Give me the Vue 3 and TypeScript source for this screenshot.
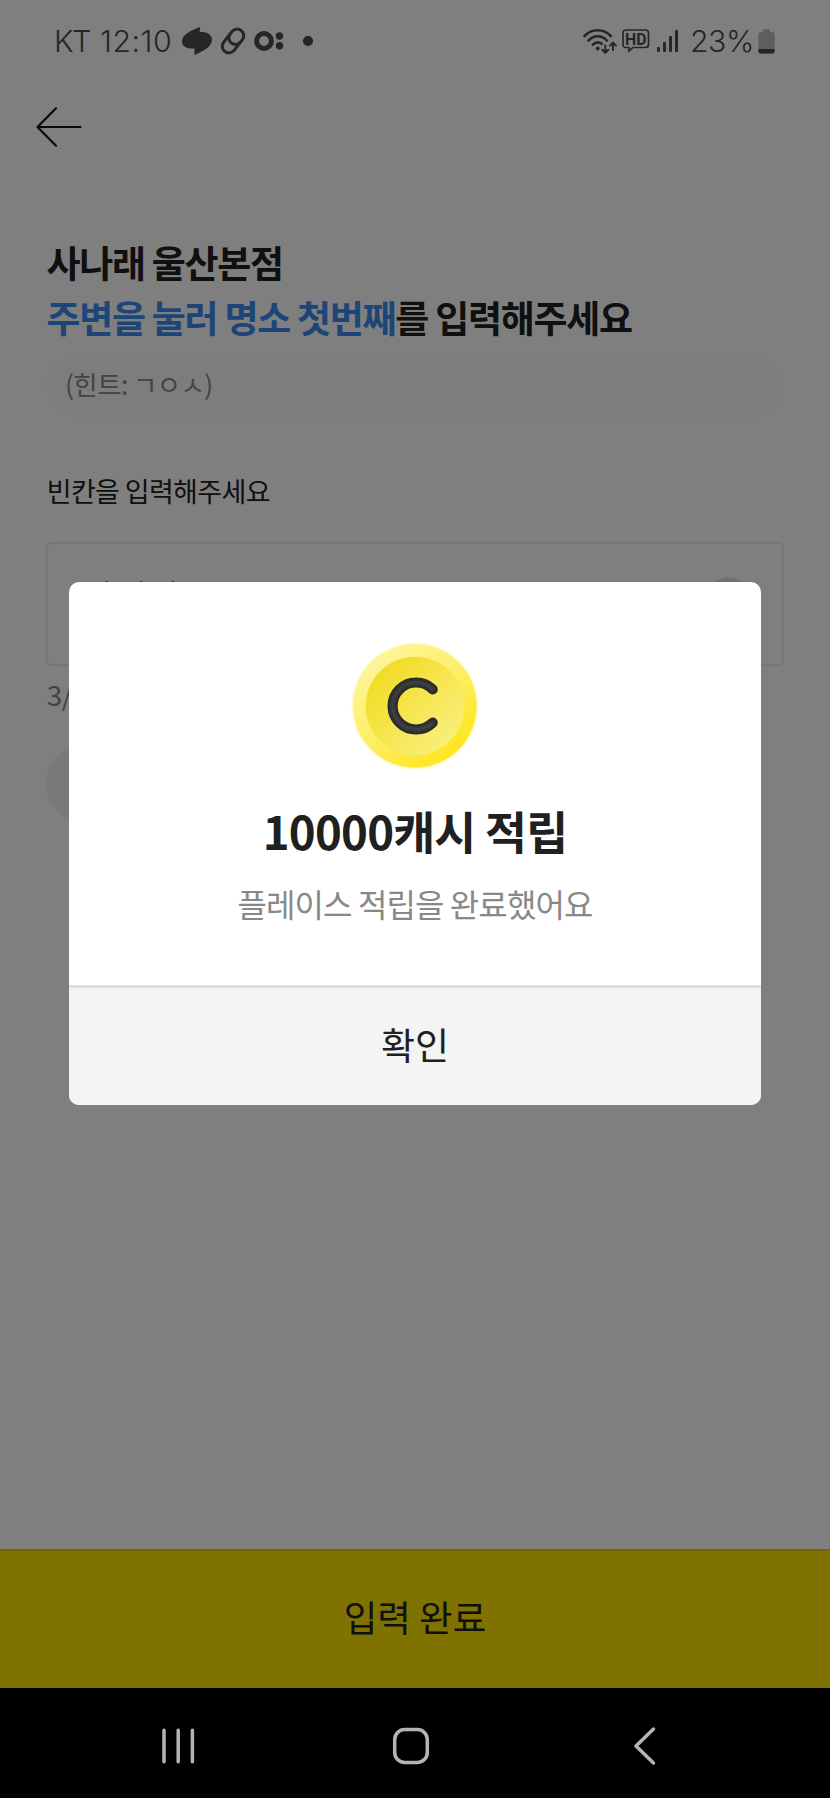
<script setup lang="ts">
import { ref } from 'vue'

const shopName = '사나래 울산본점'
const question = { highlight: '주변을 눌러 명소 첫번째', rest: '를 입력해주세요' }
const hint = '(힌트: ㄱㅇㅅ)'
const answer = ref('간월산')
const signalBars = [5, 10, 16, 22]
</script>

<template>
  <div class="screen">
    <header class="status">
      <span class="carrier">KT</span>
      <span class="clock">12:10</span>
      <svg class="ico-blob" width="30" height="30" viewBox="0 0 30 30">
        <path d="M18 1 C18.600 1 17.500 4.500 17.700 6 C24 5.500 30 8 30 13.500 C30 21 21 25 13.500 28.800 C12 29.500 12.300 25 12.600 22.500 C6 23 0 21 0 15.500 C0 8.500 8 5 18 1Z" />
      </svg>
      <svg class="ico-link" width="26" height="28" viewBox="-13 -14 26 28">
        <g transform="rotate(38)" fill="none" stroke="#4c4c4c" stroke-width="3">
          <rect x="-6.600" y="-13.300" width="13.200" height="26.600" rx="6.600" />
          <path d="M-6.600 -4 A6.600 6.600 0 0 0 6.600 -4" />
        </g>
      </svg>
      <svg class="ico-o" width="30" height="20" viewBox="0 0 30 20">
        <circle cx="10" cy="10" r="7.400" fill="none" stroke="#4c4c4c" stroke-width="5" />
        <circle cx="25.500" cy="5" r="3.700" />
        <circle cx="25.500" cy="14.800" r="3.700" />
      </svg>
      <i class="more-dot"></i>

      <svg class="ico-wifi" width="34" height="26" viewBox="0 0 34 26">
        <g fill="none" stroke="#4c4c4c" stroke-width="2.600" stroke-linecap="round">
          <path d="M1.500 8 Q7 2.200 14.700 2.200 Q22.500 2.200 27.800 8" />
          <path d="M5.500 12.500 Q9.500 8.300 14.700 8.300 Q20 8.300 23.800 12.500" />
          <path d="M9.800 16.700 Q12 14.400 14.700 14.400 Q17 14.400 18.700 15.800" />
          <path stroke-width="2" d="M22.300 17.500 V24.500 M19.300 21.800 L22.300 24.800 L25.300 21.800 M30 22 V15 M27 17.600 L30 14.600 L33 17.600" />
        </g>
        <circle cx="14.700" cy="20.500" r="1.900" />
      </svg>
      <svg class="ico-hd" width="28" height="24" viewBox="0 0 28 24">
        <path d="M4 1 H23.500 Q26.500 1 26.500 4 V15.500 Q26.500 18.500 23.500 18.500 H11 L7 22 V18.500 H4 Q1 18.500 1 15.500 V4 Q1 1 4 1Z" fill="none" stroke="#4c4c4c" stroke-width="1.700" />
        <text x="13.800" y="15.700" text-anchor="middle" textLength="21.500" lengthAdjust="spacingAndGlyphs">HD</text>
      </svg>
      <div class="signal">
        <i v-for="h in signalBars" :key="h" :style="{ height: h + 'px' }"></i>
      </div>
      <span class="percent">23%</span>
      <svg class="ico-batt" width="17" height="25" viewBox="0 0 17 25">
        <path class="shell" d="M5 1 Q5 .2 6 .2 H11 Q12 .2 12 1 V3 H14 Q16.600 3 16.600 5.500 V22 Q16.600 24.500 14 24.500 H3 Q.4 24.500 .4 22 V5.500 Q.4 3 3 3 H5Z" />
        <path d="M.4 20 H16.600 V22 Q16.600 24.500 14 24.500 H3 Q.4 24.500 .4 22Z" />
      </svg>
    </header>

    <nav class="topbar">
      <svg width="46" height="40" viewBox="0 0 46 40">
        <path d="M44.500 20 H1.500 M20 1.200 L1.500 20 L20 38.800" fill="none" stroke="#151515" stroke-width="2.200" stroke-linecap="round" stroke-linejoin="round" />
      </svg>
    </nav>

    <main class="content">
      <h1 class="question">
        {{ shopName }}<br /><em>{{ question.highlight }}</em>{{ question.rest }}
      </h1>
      <p class="hint">{{ hint }}</p>
      <label class="label">빈칸을 입력해주세요</label>
      <div class="field">
        <span>{{ answer }}</span>
        <i class="clear"></i>
      </div>
      <p class="count">{{ answer.length }}/15</p>
      <div class="chip"></div>
    </main>

    <button class="submit">입력 완료</button>
    <div class="dim">
      <section class="modal">
        <div class="modal-body">
          <svg class="coin" width="132" height="132" viewBox="-66 -66 132 132">
            <defs>
              <linearGradient id="rim" x1="0.200" y1="0.100" x2="0.800" y2="0.900">
                <stop offset="0" stop-color="#fff49a" />
                <stop offset="0.500" stop-color="#fdee66" />
                <stop offset="1" stop-color="#ffe620" />
              </linearGradient>
              <linearGradient id="face" x1="0.150" y1="0.150" x2="0.850" y2="0.850">
                <stop offset="0" stop-color="#f1dc25" />
                <stop offset="1" stop-color="#faef79" />
              </linearGradient>
              <filter id="glow" x="-10%" y="-10%" width="120%" height="120%">
                <feGaussianBlur stdDeviation="1.300" />
              </filter>
              <filter id="soft" x="-20%" y="-20%" width="140%" height="140%">
                <feGaussianBlur stdDeviation="1.500" />
              </filter>
            </defs>
            <circle r="62" fill="#fff15c" filter="url(#glow)" />
            <circle r="61.500" fill="url(#rim)" />
            <circle r="49.300" fill="url(#face)" />
            <g fill="none" stroke-linecap="round">
              <path d="M17.700 -16.600 A23.500 23.500 0 1 0 17.700 16.600" stroke="#2a2a2a" stroke-width="10.200" />
              <path d="M17.700 -16.600 A23.500 23.500 0 1 0 17.700 16.600" stroke="#48484b" stroke-width="3" filter="url(#soft)" />
            </g>
          </svg>
          <h2>10000캐시 적립</h2>
          <p>플레이스 적립을 완료했어요</p>
        </div>
        <button class="confirm">확인</button>
      </section>
    </div>

    <footer class="sysnav">
      <svg width="34" height="40" viewBox="0 0 34 40">
        <path d="M2 4.200 V35.800 M16.200 4.200 V35.800 M30.400 4.200 V35.800" />
      </svg>
      <svg class="home" width="38" height="40" viewBox="0 0 38 40">
        <rect x="2.700" y="3.500" width="32.600" height="33" rx="10" />
      </svg>
      <svg width="24" height="40" viewBox="0 0 24 40">
        <path d="M20.500 3 L3 20 L20.500 37" />
      </svg>
    </footer>
  </div>
</template>

<style>
body {
  margin: 0;
}
</style>

<style scoped>
.screen {
  position: relative;
  display: flex;
  flex-direction: column;
  width: 830px;
  height: 1798px;
  background: #fff;
  overflow: hidden;
  font-family: 'Noto Sans CJK KR', sans-serif;
  color: #202020;
}
h1, h2, p {
  margin: 0;
}
button {
  border: 0;
  padding: 0;
  font-family: inherit;
  color: inherit;
}
svg {
  display: block;
  flex: none;
}
.status {
  display: flex;
  align-items: center;
  height: 82px;
  padding: 0 55px 0 54px;
  box-sizing: border-box;
  font: 350 30.300px/82px Inter, sans-serif;
  color: #4c4c4c;
  white-space: nowrap;
}
.status svg {
  fill: #4c4c4c;
}
.carrier {
  width: 46px;
  letter-spacing: -1.400px;
}
.clock {
  width: 82px;
  letter-spacing: 0.500px;
}
.ico-link {
  margin-left: 8px;
}
.ico-o {
  margin-left: 8px;
}
.more-dot {
  width: 9.500px;
  height: 9.500px;
  border-radius: 50%;
  background: #4c4c4c;
  margin-left: 19px;
}
.ico-wifi {
  margin-left: auto;
}
.ico-hd {
  margin-left: 5px;
}
.ico-hd text {
  font: 700 16px Roboto, sans-serif;
}
.signal {
  display: flex;
  align-items: flex-end;
  gap: 3.300px;
  height: 22px;
  margin: 0 12px 0 7px;
}
.signal i {
  width: 2.700px;
  border-radius: 1px;
  background: #4c4c4c;
}
.percent {
  width: 68px;
  letter-spacing: -0.500px;
}
.ico-batt .shell {
  fill: #bcbcbc;
}
.topbar {
  height: 153px;
  padding: 25px 0 0 36px;
  box-sizing: border-box;
}
.content {
  display: flex;
  flex-direction: column;
  flex: 1;
  padding: 0 46px;
}
.question {
  padding-left: 0.500px;
  font-size: 37px;
  line-height: 55px;
  font-weight: 700;
  letter-spacing: -1.290px;
  white-space: nowrap;
}
.question em {
  font-style: normal;
  color: #3a8bf0;
}
.hint {
  height: 60px;
  margin-top: 12px;
  padding-left: 19px;
  border-radius: 30px;
  background: #fafafa;
  font-size: 26.500px;
  line-height: 54px;
  letter-spacing: -0.600px;
  color: #888;
}
.label {
  margin-top: 55px;
  padding-left: 0.700px;
  font-size: 27px;
  line-height: 38px;
  letter-spacing: -0.640px;
}
.field {
  display: flex;
  align-items: center;
  justify-content: space-between;
  height: 124px;
  margin-top: 32px;
  padding: 0 33px;
  box-sizing: border-box;
  border: 2px solid #ededed;
  border-radius: 5px;
  font-size: 36px;
  line-height: 52px;
}
.field span {
  margin-top: -16px;
}
.clear {
  width: 41px;
  height: 41px;
  margin-top: -14px;
  border-radius: 50%;
  background: #e2e2e2;
}
.count {
  margin-top: 9px;
  padding-left: 0.700px;
  font-size: 28px;
  line-height: 38px;
  letter-spacing: -0.500px;
  color: #888;
}
.chip {
  width: 300px;
  height: 80px;
  margin-top: 31px;
  border-radius: 40px;
  background: #f3f3f3;
}
.submit {
  height: 139px;
  margin-bottom: 110px;
  padding-bottom: 6px;
  border-top: 2px solid #e6ce00;
  background: #ffe400;
  font-size: 36.500px;
  line-height: 52px;
}
.dim {
  position: absolute;
  inset: 0 0 110px;
  background: rgba(0, 0, 0, 0.5);
}
.modal {
  width: 692px;
  height: 523px;
  margin: 582px 0 0 69px;
  border-radius: 10px;
  background: #fff;
  overflow: hidden;
  display: flex;
  flex-direction: column;
}
.modal-body {
  flex: 1;
  display: flex;
  flex-direction: column;
  align-items: center;
  padding-top: 58px;
}
.modal h2 {
  margin-top: 25px;
  font-size: 45.500px;
  line-height: 66px;
  font-weight: 700;
  letter-spacing: -0.750px;
}
.modal p {
  margin-top: 17px;
  font-size: 32px;
  line-height: 46px;
  letter-spacing: -0.900px;
  color: #888;
}
.confirm {
  height: 120px;
  padding-bottom: 6px;
  border-top: 3px solid #dedede;
  background: #f4f4f4;
  font-size: 37px;
  line-height: 52px;
}
.sysnav {
  position: absolute;
  inset: auto 0 0;
  height: 110px;
  padding: 5px 173px 0 162px;
  box-sizing: border-box;
  display: flex;
  align-items: center;
  justify-content: space-between;
  background: #000;
}
.sysnav .home {
  margin-right: 8px;
}
.sysnav svg {
  fill: none;
  stroke: #b4b4b4;
  stroke-width: 3.500;
  stroke-linecap: round;
  stroke-linejoin: round;
}
</style>
